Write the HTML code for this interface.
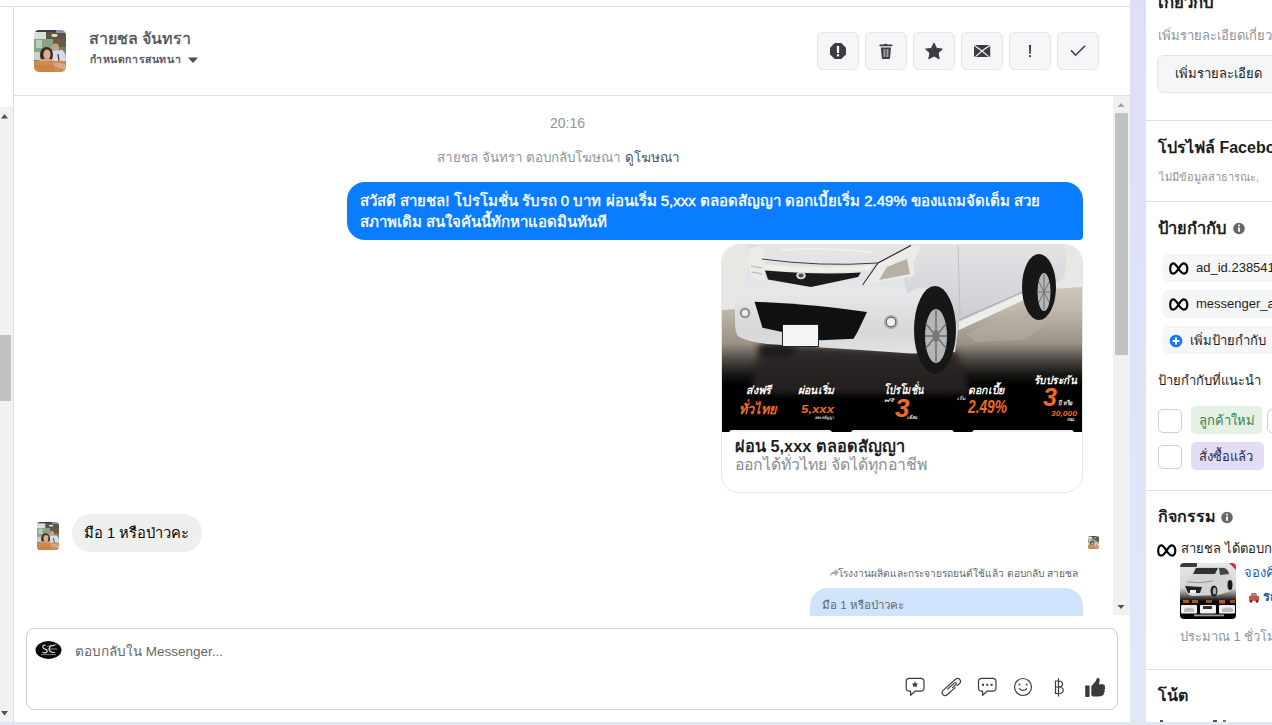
<!DOCTYPE html>
<html><head><meta charset="utf-8">
<style>
*{box-sizing:border-box;margin:0;padding:0}
html,body{width:1272px;height:725px;overflow:hidden;background:#fff;font-family:"Liberation Sans",sans-serif;color:#1c1e21}
.a{position:absolute}
.t{position:absolute;white-space:nowrap;line-height:1}
.btn{position:absolute;top:32px;width:42px;height:38px;border:1px solid #e3e5e8;border-radius:6px;background:#f5f6f7}
.chip{position:absolute;left:1162px;width:120px;height:28px;border-radius:6px;background:#f5f6f7}
.cb{position:absolute;left:1158px;width:24px;height:24px;border:1px solid #ccd0d5;border-radius:5px;background:#fff}
.sep{position:absolute;left:1146px;width:126px;height:1px;background:#dadde1}
</style></head><body>

<!-- top line -->
<div class="a" style="left:0;top:6px;width:1130px;height:1px;background:#dcdee1"></div>
<!-- left vertical line -->
<div class="a" style="left:13px;top:6px;width:1px;height:716px;background:#dcdee1"></div>
<!-- left scrollbar -->
<div class="a" style="left:0;top:107px;width:13px;height:615px;background:#f1f1f1"></div>
<div class="a" style="left:0;top:335px;width:11px;height:66px;background:#c1c1c1"></div>
<svg class="a" style="left:0;top:110px" width="10" height="10"><path d="M1 8.5 L4.5 4 L8 8.5Z" fill="#505050"/></svg>
<svg class="a" style="left:0;top:708px" width="10" height="10"><path d="M1 3 L8 3 L4.5 7.5Z" fill="#505050"/></svg>

<!-- header -->
<div class="a" style="left:13px;top:95px;width:1117px;height:1px;background:#dcdee1"></div>
<svg class="a" style="left:34px;top:30px" width="32" height="42" viewBox="0 0 32 42">
 <defs>
  <clipPath id="avc"><rect width="32" height="42" rx="5"/></clipPath>
  <filter id="avb" x="-10%" y="-10%" width="120%" height="120%"><feGaussianBlur stdDeviation="0.7"/></filter>
  <g id="avg">
   <rect width="32" height="42" fill="#7a7a68"/>
   <rect x="0" y="0" width="14" height="10" fill="#d9e0da"/>
   <rect x="12" y="0" width="20" height="9" fill="#5d5446"/>
   <rect x="0" y="0" width="32" height="2" fill="#3b3d45"/>
   <rect x="22" y="0" width="10" height="3" fill="#7f93b5"/>
   <ellipse cx="20.5" cy="5.5" rx="3.2" ry="1.4" fill="#f3e2b8"/>
   <rect x="0" y="9" width="19" height="14" fill="#87a487"/>
   <rect x="2" y="10" width="6" height="8" fill="#b9cdb8"/>
   <rect x="19" y="9" width="13" height="8" fill="#6a5a45"/>
   <rect x="0" y="22" width="10" height="8" fill="#c9d2c6"/>
   <ellipse cx="21.5" cy="17.5" rx="3.5" ry="4" fill="#c8a086"/>
   <path d="M17 21 L28 20 Q32 22 32 30 V40 H18Z" fill="#d7dce6"/>
   <path d="M24 24 L26 38" stroke="#3a3a44" stroke-width="1.2"/>
   <ellipse cx="12.5" cy="25" rx="6.5" ry="8" fill="#3b2924"/>
   <ellipse cx="13" cy="24.5" rx="3.6" ry="5" fill="#d9ae95"/>
   <path d="M5 30 Q12 27 20 30 V33 H5Z" fill="#d4a68b"/>
   <rect x="0" y="31" width="32" height="11" fill="#d08c4f"/>
   <path d="M0 35 H20 V42 H0Z" fill="#cc8445"/>
   <path d="M20 33 Q27 32 32 35 V40 Q26 38 20 36Z" fill="#d7a78c"/>
  </g>
 </defs>
 <g clip-path="url(#avc)"><use href="#avg" filter="url(#avb)"/></g>
</svg>
<div class="t" style="left:89px;top:31px;font-size:16px;font-weight:normal;-webkit-text-stroke:0.35px #4b4f56;color:#4b4f56">สายชล จันทรา</div>
<div class="t" style="left:90px;top:54px;font-size:10.5px;font-weight:normal;-webkit-text-stroke:0.35px #4b4f56;letter-spacing:0.6px;color:#4b4f56">กำหนดการสนทนา</div>
<svg class="a" style="left:187px;top:56px" width="12" height="8"><path d="M1 1.5 L11 1.5 L6 7Z" fill="#4b4f56"/></svg>

<!-- header buttons -->
<div class="btn" style="left:817px"></div>
<div class="btn" style="left:865px"></div>
<div class="btn" style="left:913px"></div>
<div class="btn" style="left:961px"></div>
<div class="btn" style="left:1009px"></div>
<div class="btn" style="left:1057px"></div>
<svg class="a" style="left:0;top:0" width="1130" height="96">
 <!-- octagon -->
 <path d="M834.7 43 H841.3 L846 47.7 V54.3 L841.3 59 H834.7 L830 54.3 V47.7Z" fill="#3c3d40"/>
 <rect x="836.9" y="46" width="2.2" height="7" fill="#fff"/>
 <rect x="836.9" y="54.2" width="2.2" height="2.2" fill="#fff"/>
 <!-- trash -->
 <path d="M883.5 45 Q885.75 42.5 888 45Z" fill="#3c3d40"/>
 <rect x="879.3" y="44.4" width="13.2" height="1.8" rx="0.9" fill="#3c3d40"/>
 <path d="M880.8 47.5 H891 L890 58 Q889.9 59 888.9 59 H882.9 Q881.9 59 881.8 58Z" fill="#3c3d40"/>
 <rect x="883.6" y="49" width="1" height="8" fill="#f5f6f7" opacity="0.8"/>
 <rect x="885.5" y="49" width="1" height="8" fill="#f5f6f7" opacity="0.5"/>
 <rect x="887.3" y="49" width="1" height="8" fill="#f5f6f7" opacity="0.8"/>
 <!-- star -->
 <path d="M934 43 L936.6 48.4 L942.4 49.1 L938.1 53 L939.2 58.8 L934 56 L928.8 58.8 L929.9 53 L925.6 49.1 L931.4 48.4Z" fill="#3c3d40" stroke="#3c3d40" stroke-width="1" stroke-linejoin="round"/>
 <!-- envelope -->
 <rect x="974" y="45" width="16.2" height="12" rx="1.5" fill="#3c3d40"/>
 <path d="M974.5 45.5 L982 51 L989.7 45.5 M975.5 56.6 L982 51 L988.7 56.6" stroke="#f5f6f7" stroke-width="1.2" fill="none"/>
 <!-- exclamation -->
 <path d="M1028.9 45 H1031.1 L1030.7 54 H1029.3Z" fill="#3c3d40"/>
 <circle cx="1030" cy="56.2" r="1.1" fill="#3c3d40"/>
 <!-- check -->
 <path d="M1071 50.3 L1075.6 55.2 L1085 45.8" stroke="#3c3d40" stroke-width="1.6" fill="none"/>
</svg>

<!-- message scrollbar -->
<div class="a" style="left:1113px;top:96px;width:17px;height:519px;background:#f1f1f1"></div>
<div class="a" style="left:1115px;top:113px;width:13px;height:242px;background:#c1c1c1"></div>
<svg class="a" style="left:1113px;top:96px" width="17" height="519">
 <path d="M4.5 11 L8 7 L11.5 11Z" fill="#a3a3a3"/>
 <path d="M4.5 509 L11.5 509 L8 513Z" fill="#505050"/>
</svg>

<!-- messages -->
<div class="t" style="left:550px;top:116px;font-size:14px;color:#90949c">20:16</div>
<div class="t" style="left:437px;top:151px;font-size:13.4px;color:#90949c">สายชล จันทรา ตอบกลับโฆษณา <span style="color:#4a5270">ดูโฆษณา</span></div>

<div class="a" style="left:347px;top:182px;width:736px;height:58px;border-radius:18px 18px 4px 18px;background:#0a7cff"></div>
<div class="a" style="left:360px;top:190px;width:720px;font-size:15px;line-height:21px;color:#fff;font-weight:normal;-webkit-text-stroke:0.4px #fff">สวัสดี สายชล! โปรโมชั่น รับรถ 0 บาท ผ่อนเริ่ม 5,xxx ตลอดสัญญา ดอกเบี้ยเริ่ม 2.49% ของแถมจัดเต็ม สวย<br>สภาพเดิม สนใจคันนี้ทักหาแอดมินทันที</div>

<!-- card -->
<div class="a" id="card" style="left:721px;top:244px;width:362px;height:249px;border:1px solid #e4e6eb;border-radius:18px;overflow:hidden;background:#fff">
 <svg class="a" style="left:-1px;top:-1px" width="362" height="188" viewBox="0 0 362 188">
  <defs>
   <linearGradient id="floor" x1="0" y1="43" x2="0" y2="188" gradientUnits="userSpaceOnUse">
    <stop offset="0" stop-color="#cdc5ba"/><stop offset="0.15" stop-color="#c2b9ad"/><stop offset="0.39" stop-color="#9a9084"/><stop offset="0.5" stop-color="#4f4a44"/><stop offset="0.6" stop-color="#181715"/><stop offset="0.68" stop-color="#000"/><stop offset="1" stop-color="#000"/>
   </linearGradient>
   <linearGradient id="body" x1="0" y1="0" x2="0" y2="110" gradientUnits="userSpaceOnUse">
    <stop offset="0" stop-color="#dcdde0"/><stop offset="0.45" stop-color="#e6e7e9"/><stop offset="0.8" stop-color="#d5d7d9"/><stop offset="1" stop-color="#e2e3e4"/>
   </linearGradient>
   <filter id="shb" x="-20%" y="-20%" width="140%" height="140%"><feGaussianBlur stdDeviation="3"/></filter>
   <linearGradient id="side" x1="0" y1="0" x2="0" y2="90" gradientUnits="userSpaceOnUse">
    <stop offset="0" stop-color="#e2e3e5"/><stop offset="0.6" stop-color="#d3d5d8"/><stop offset="1" stop-color="#c3c5c8"/>
   </linearGradient>
  </defs>
  <rect width="362" height="188" fill="#e8e7e3"/>
  <path d="M0 66 L362 43 V188 H0Z" fill="url(#floor)"/>
  <!-- floor reflection patch -->
  <path d="M245 90 L300 64 L330 75 L305 96 L255 98Z" fill="#b7afa4" opacity="0.5"/>
  <g filter="url(#shb)"><path d="M40 100 Q150 106 236 108 L250 150 L30 150 Q34 120 40 100Z" fill="#2a2622" opacity="0.9"/>
  <ellipse cx="56" cy="106" rx="20" ry="8" fill="#1f1c1a"/></g>
  <!-- car body -->
  <path d="M28 0 H342 Q347 18 343 34 L334 39 L314 50 L237 86 L234 108 L190 109.5 L140 106 L46 100 Q22 97 16 91 Q14 86 14 78 L14 60 Q18 46 26 34 Z" fill="url(#body)"/>
  <!-- side panel -->
  <path d="M176 0 H342 Q347 18 343 34 L334 39 L314 50 L237 86 L233 70 Q222 40 196 44 L186 50 Q180 20 176 0Z" fill="url(#side)"/>
  <path d="M237 0 L239 70" stroke="#b9bbbe" stroke-width="0.8"/>
  <path d="M238 78 L314 44 L316 50 L238 86Z" fill="#eceded"/>
  <path d="M238 76 L313 43" stroke="#8d8f92" stroke-width="0.7"/>
  <!-- hood -->
  <path d="M41 0 H190 L157 19 Q100 22 41 15Z" fill="#e3e4e6"/>
  <path d="M60 6 Q100 3 150 8" stroke="#f3f3f4" stroke-width="2" fill="none" opacity="0.8"/>
  <!-- left headlight -->
  <path d="M28 5 L41 1 L44 17 L43 37 L30 34 L27 20Z" fill="#ecebe8"/>
  <path d="M30 22 L41 24 M31 28 L41 30" stroke="#a5a5a5" stroke-width="0.8"/>
  <!-- hood edge -->
  <path d="M41 15 Q100 23 157 19 L190 1.5" stroke="#3d3d3d" stroke-width="1" fill="none"/>
  <!-- chrome bar -->
  <path d="M43 20 Q98 26 153 21 L149 26 Q98 31 44 26Z" fill="#efeee9"/>
  <!-- grille -->
  <path d="M44 26.5 Q98 31 140 28.5 L137 33 L90 43 L47 35.5Z" fill="#1a1a1a"/>
  <ellipse cx="80" cy="31.5" rx="4.8" ry="3.8" fill="#d8d8d8"/>
  <ellipse cx="80" cy="31.5" rx="2.6" ry="2" fill="#4a4a4a"/>
  <!-- right headlight -->
  <path d="M141.6 41 L157 19 L190 1.5 L201 2 L192 18 L193.5 32Z" fill="#ecebe6"/>
  <path d="M158 36 L166 23 L186 15 L189 30Z" fill="#a59d8c" opacity="0.75"/>
  <path d="M141.6 41 L157 19 L190 1.5" stroke="#2e2e2e" stroke-width="1.1" fill="none"/>
  <!-- lower black grille -->
  <path d="M33.6 57.8 Q90 60 146 68 L137 87 L132.6 94.7 L99.6 96.3 L41.5 83.7Z" fill="#101010"/>
  <rect x="61" y="80" width="37" height="23" fill="#222"/>
  <rect x="62" y="81" width="35" height="21" fill="#f5f5f5"/>
  <circle cx="24" cy="69" r="5.5" fill="#a9abad"/><circle cx="24" cy="69" r="4" fill="#ededed"/><circle cx="24" cy="69" r="4" fill="none" stroke="#555" stroke-width="0.8"/>
  <circle cx="170" cy="78" r="7" fill="#a9abad"/><circle cx="170" cy="78" r="4.8" fill="#eeeeee"/><circle cx="170" cy="78" r="4.8" fill="none" stroke="#444" stroke-width="0.9"/>
  <!-- under shadow tire -->
  
  
  <!-- front wheel -->
  <ellipse cx="214" cy="86" rx="21" ry="44" fill="#171717"/>
  <ellipse cx="215" cy="92" rx="11" ry="27" fill="#b3b5b7"/>
  <path d="M215 66 V118 M205 80 L225 104 M225 80 L205 104 M204 92 H226" stroke="#6c6e70" stroke-width="1.4"/>
  <ellipse cx="215" cy="92" rx="3.5" ry="6" fill="#777"/>
  <!-- rear wheel -->
  <ellipse cx="318" cy="43" rx="17" ry="33" fill="#171717"/>
  <ellipse cx="323" cy="48" rx="6.5" ry="19" fill="#b3b5b7"/>
  <path d="M323 30 V66 M317 48 H329 M318 38 L328 58 M328 38 L318 58" stroke="#6c6e70" stroke-width="1"/>
  <!-- text band -->
  <g font-family="Liberation Sans, sans-serif" font-style="italic" font-weight="bold">
   <text x="25" y="149.5" font-size="11" fill="#fff" textLength="25" lengthAdjust="spacingAndGlyphs">ส่งฟรี</text>
   <text x="18" y="169.5" font-size="14" fill="#f26a25" textLength="37" lengthAdjust="spacingAndGlyphs">ทั่วไทย</text>
   <text x="77" y="149.5" font-size="11" fill="#fff" textLength="36" lengthAdjust="spacingAndGlyphs">ผ่อนเริ่ม</text>
   <text x="80" y="168.5" font-size="11" fill="#f26a25" textLength="33" lengthAdjust="spacingAndGlyphs">5,xxx</text>
   <text x="94" y="175" font-size="4.5" fill="#ddd" textLength="19" lengthAdjust="spacingAndGlyphs">ตลอดสัญญา</text>
   <text x="163" y="150" font-size="12" fill="#fff" textLength="39" lengthAdjust="spacingAndGlyphs">โปรโมชั่น</text>
   <text x="162" y="157.5" font-size="4.5" fill="#ddd" textLength="10" lengthAdjust="spacingAndGlyphs">ฟรี</text>
   <text x="174" y="173" font-size="26" fill="#f26a25">3</text>
   <text x="186" y="175" font-size="5" fill="#ddd" textLength="10" lengthAdjust="spacingAndGlyphs">เดือน</text>
   <text x="247" y="149.5" font-size="11" fill="#fff" textLength="36" lengthAdjust="spacingAndGlyphs">ดอกเบี้ย</text>
   <text x="236" y="155.5" font-size="4.5" fill="#ddd" textLength="8" lengthAdjust="spacingAndGlyphs">เริ่ม</text>
   <text x="247" y="169" font-size="18" fill="#f26a25" textLength="39" lengthAdjust="spacingAndGlyphs">2.49%</text>
   <text x="313" y="140" font-size="11" fill="#fff" textLength="43" lengthAdjust="spacingAndGlyphs">รับประกัน</text>
   <text x="322" y="162" font-size="25" fill="#f26a25">3</text>
   <text x="337" y="161" font-size="6" fill="#eee" textLength="15" lengthAdjust="spacingAndGlyphs">ปี หรือ</text>
   <text x="330" y="172" font-size="8" fill="#f26a25" textLength="26" lengthAdjust="spacingAndGlyphs">30,000</text>
   <text x="346" y="177" font-size="5" fill="#eee" textLength="8" lengthAdjust="spacingAndGlyphs">กม.</text>
  </g>
  <rect x="8" y="186" width="103" height="6" rx="3" fill="#f4f4f4"/>
  <rect x="130" y="186" width="103" height="6" rx="3" fill="#f4f4f4"/>
  <rect x="251" y="186" width="102" height="6" rx="3" fill="#f4f4f4"/>
 </svg>
 <div class="t" style="left:13px;top:193px;font-size:16.3px;font-weight:bold;color:#1c1e21">ผ่อน 5,xxx ตลอดสัญญา</div>
 <div class="t" style="left:13px;top:212px;font-size:15.8px;color:#8a8d91">ออกได้ทั่วไทย จัดได้ทุกอาชีพ</div>
</div>

<!-- incoming -->
<svg class="a" style="left:37px;top:522px" width="22" height="28" viewBox="0 0 32 42" preserveAspectRatio="none"><g clip-path="url(#avc)"><use href="#avg" filter="url(#avb)"/></g></svg>
<div class="a" style="left:72px;top:514px;width:130px;height:38px;border-radius:19px;background:#efefef"></div>
<div class="t" style="left:84px;top:526px;font-size:14.7px;color:#050505">มือ 1 หรือป่าวคะ</div>

<svg class="a" style="left:1088px;top:536px" width="11" height="13" viewBox="0 0 32 42" preserveAspectRatio="none"><g clip-path="url(#avc)"><use href="#avg" filter="url(#avb)"/></g></svg>

<svg class="a" style="left:829px;top:567px" width="10" height="10"><path d="M1 9.5 Q1.5 4.5 6 4.2 V1.8 L9.8 5.6 L6 9.2 V6.8 Q3 6.8 1 9.5Z" fill="#a8abb0"/></svg>
<div class="t" style="left:838px;top:569px;font-size:10.2px;color:#65676b">โรงงานผลิตและกระจายรถยนต์ใช้แล้ว ตอบกลับ สายชล</div>
<div class="a" style="left:810px;top:588px;width:273px;height:28px;overflow:hidden"><div style="width:273px;height:50px;border-radius:18px;background:#cfe4fc"></div></div>
<div class="t" style="left:822px;top:600px;font-size:11.5px;color:#606770">มือ 1 หรือป่าวคะ</div>

<!-- composer -->
<div class="a" style="left:26px;top:628px;width:1092px;height:82px;border:1px solid #ccd0d5;border-radius:8px"></div>
<svg class="a" style="left:35px;top:640px" width="28" height="20">
 <ellipse cx="13.5" cy="10" rx="13" ry="9" fill="#0b0b0b"/>
 <path d="M10.5 5.2 Q7.5 4.6 7.8 7 Q8.2 9 10.8 9.4 Q13 10 11.8 12.2 Q10.5 13.6 7.5 12.6" stroke="#e8e8e8" stroke-width="1.1" fill="none"/>
 <path d="M19.5 5.6 Q14.5 4.8 14.2 9 Q14.2 12.8 19.8 12.4" stroke="#e8e8e8" stroke-width="1.1" fill="none"/>
 <path d="M12 6.5 L21.5 4.5 M13 9 H22" stroke="#cfcfcf" stroke-width="0.7"/>
 <path d="M6 14.6 H21" stroke="#9a9a9a" stroke-width="0.8"/>
</svg>
<div class="t" style="left:75px;top:645px;font-size:13.5px;color:#65676b">ตอบกลับใน Messenger...</div>
<svg class="a" style="left:900px;top:672px" width="210" height="30" viewBox="900 672 210 30">
 <g fill="none" stroke="#3a3b3d" stroke-width="1.2" stroke-linejoin="round" stroke-linecap="round">
  <!-- sticker bubble -->
  <path d="M909.5 678.3 H920.7 Q924 678.3 924 681.6 V688 Q924 691.2 920.7 691.2 H915 L910.6 695.3 V691.2 H909.5 Q906.2 691.2 906.2 688 V681.6 Q906.2 678.3 909.5 678.3Z"/>
  <!-- paperclip -->
  <g transform="translate(951.3 687) rotate(-42)" stroke-width="1.15">
   <path d="M2.5 3 H-8.3 A3 3 0 0 1 -8.3 -3 H8.3 A3 3 0 0 1 8.3 3 H5.5"/>
   <path d="M-4 -0.9 H5.2 A1.1 1.1 0 0 1 5.2 1.3 H0.5"/>
  </g>
  <!-- chat dots -->
  <path d="M981.8 678.3 H992.7 Q996 678.3 996 681.6 V688 Q996 691.2 992.7 691.2 H987 L982.6 695.3 V691.2 H981.8 Q978.5 691.2 978.5 688 V681.6 Q978.5 678.3 981.8 678.3Z"/>
  <!-- smiley -->
  <circle cx="1023" cy="687" r="8.5"/>
  <path d="M1019.3 688.6 Q1023 692.3 1026.7 688.6"/>
  <!-- baht -->
  <path d="M1055.5 681 H1059 Q1062.5 681 1062.5 684.2 Q1062.5 687 1059 687 H1055.5 M1059 687 Q1063.2 687 1063.2 690.3 Q1063.2 693.5 1059 693.5 H1055.5 V681 M1058.5 678.5 V696"/>
 </g>
 <path d="M915 681.3 L916 683.6 L918.4 683.8 L916.6 685.3 L917.1 687.6 L915 686.3 L912.9 687.6 L913.4 685.3 L911.6 683.8 L914 683.6Z" fill="#3a3b3d"/>
 <rect x="982" y="683.8" width="2" height="2" fill="#3a3b3d"/><rect x="986.3" y="683.8" width="2" height="2" fill="#3a3b3d"/><rect x="990.6" y="683.8" width="2" height="2" fill="#3a3b3d"/>
 <circle cx="1019.4" cy="684.5" r="0.95" fill="#3a3b3d"/><circle cx="1026.6" cy="684.5" r="0.95" fill="#3a3b3d"/>
 <!-- thumb -->
 <rect x="1085.2" y="685.6" width="4.4" height="11.4" rx="0.7" fill="#3a3b3d"/>
 <path d="M1091.3 686.3 L1095.6 681.2 Q1096.6 678.8 1097.3 677.9 Q1099.3 677.3 1099.6 679.6 Q1099.9 681.8 1098.8 684.2 H1102.6 Q1105.2 684.6 1104.9 686.8 Q1105.9 688.4 1104.5 689.8 Q1105.5 691.6 1103.9 692.8 Q1104.4 695.1 1102 695.8 Q1100.9 696.6 1098.3 696.6 H1093.5 Q1091.3 696.6 1091.3 694.5Z" fill="#3a3b3d"/>
</svg>

<!-- lavender stripe -->
<div class="a" style="left:1130px;top:0;width:16px;height:722px;background:linear-gradient(180deg,#dedff5,#e1e8f8)"></div>
<!-- bottom strip -->
<div class="a" style="left:0;top:722px;width:1272px;height:3px;background:#e1e8f5"></div>

<!-- right panel -->
<div id="rp">
 <div class="t" style="left:1158px;top:-5px;font-size:16.8px;font-weight:bold">เกี่ยวกับ</div>
 <div class="t" style="left:1158px;top:29px;font-size:13px;color:#90949c">เพิ่มรายละเอียดเกี่ยวกับ</div>
 <div class="a" style="left:1157px;top:55px;width:130px;height:38px;border:1px solid #e4e6eb;border-radius:7px;background:#f5f6f7"></div>
 <div class="t" style="left:1175px;top:67px;font-size:13px;color:#1c1e21">เพิ่มรายละเอียด</div>
 <div class="sep" style="top:120px"></div>
 <div class="t" style="left:1158px;top:140px;font-size:16px;font-weight:bold">โปรไฟล์ Facebook</div>
 <div class="t" style="left:1159px;top:172px;font-size:11px;color:#90949c">ไม่มีข้อมูลสาธารณะ,</div>
 <div class="sep" style="top:201px"></div>
 <div class="t" style="left:1158px;top:220px;font-size:16.5px;font-weight:bold">ป้ายกำกับ</div>
 <svg class="a" style="left:1233px;top:222px" width="12" height="13"><circle cx="6" cy="6.5" r="5.8" fill="#65676b"/><rect x="5.1" y="5.4" width="1.8" height="4.4" fill="#fff"/><circle cx="6" cy="3.6" r="1" fill="#fff"/></svg>
 <div class="chip" style="top:254px"></div>
 <div class="chip" style="top:290px"></div>
 <div class="chip" style="top:326px"></div>
 <svg class="a" style="left:1169px;top:262px" width="19.5" height="13" viewBox="0 0 36 24"><path d="M2.2 12.5 C2.2 6.5 4.5 2.6 7.8 2.6 C11.5 2.6 14.2 7 18 13 C21.5 18.5 24 21.4 27.5 21.4 C31 21.4 33.8 18 33.8 12.2 C33.8 6.5 31 2.6 27.5 2.6 C23.8 2.6 21 7 18 11.8 C14.6 17.5 11.6 21.4 7.8 21.4 C4.5 21.4 2.2 18 2.2 12.5Z" fill="none" stroke="#000" stroke-width="4"/></svg>
 <svg class="a" style="left:1169px;top:298px" width="19.5" height="13" viewBox="0 0 36 24"><path d="M2.2 12.5 C2.2 6.5 4.5 2.6 7.8 2.6 C11.5 2.6 14.2 7 18 13 C21.5 18.5 24 21.4 27.5 21.4 C31 21.4 33.8 18 33.8 12.2 C33.8 6.5 31 2.6 27.5 2.6 C23.8 2.6 21 7 18 11.8 C14.6 17.5 11.6 21.4 7.8 21.4 C4.5 21.4 2.2 18 2.2 12.5Z" fill="none" stroke="#000" stroke-width="4"/></svg>
 <div class="t" style="left:1196px;top:261px;font-size:13px;color:#1c1e21">ad_id.23854123456</div>
 <div class="t" style="left:1196px;top:297px;font-size:13px;color:#1c1e21">messenger_ads</div>
 <svg class="a" style="left:1169px;top:334px" width="14" height="14"><circle cx="7" cy="7" r="6.3" fill="#1877f2"/><path d="M7 3.6 V10.4 M3.6 7 H10.4" stroke="#fff" stroke-width="2"/></svg>
 <div class="t" style="left:1190px;top:334px;font-size:13px;color:#1c1e21">เพิ่มป้ายกำกับ</div>
 <div class="t" style="left:1158px;top:374px;font-size:13px;color:#1c1e21">ป้ายกำกับที่แนะนำ</div>
 <div class="cb" style="top:409px"></div>
 <div class="cb" style="top:445px"></div>
 <div class="a" style="left:1191px;top:406px;width:71px;height:28px;border-radius:5px;background:#e5f1e4"></div>
 <div class="t" style="left:1199px;top:414px;font-size:13px;color:#36804f">ลูกค้าใหม่</div>
 <div class="a" style="left:1267px;top:409px;width:24px;height:24px;border:1px solid #ccd0d5;border-radius:5px"></div>
 <div class="a" style="left:1191px;top:442px;width:73px;height:28px;border-radius:5px;background:#e3dcf5"></div>
 <div class="t" style="left:1199px;top:450px;font-size:13px;color:#2f2a4a">สั่งซื้อแล้ว</div>
 <div class="sep" style="top:490px"></div>
 <div class="t" style="left:1158px;top:509px;font-size:16px;font-weight:bold">กิจกรรม</div>
 <svg class="a" style="left:1221px;top:511px" width="12" height="13"><circle cx="6" cy="6.5" r="5.8" fill="#65676b"/><rect x="5.1" y="5.4" width="1.8" height="4.4" fill="#fff"/><circle cx="6" cy="3.6" r="1" fill="#fff"/></svg>
 <svg class="a" style="left:1157px;top:544px" width="19.5" height="13" viewBox="0 0 36 24"><path d="M2.2 12.5 C2.2 6.5 4.5 2.6 7.8 2.6 C11.5 2.6 14.2 7 18 13 C21.5 18.5 24 21.4 27.5 21.4 C31 21.4 33.8 18 33.8 12.2 C33.8 6.5 31 2.6 27.5 2.6 C23.8 2.6 21 7 18 11.8 C14.6 17.5 11.6 21.4 7.8 21.4 C4.5 21.4 2.2 18 2.2 12.5Z" fill="none" stroke="#000" stroke-width="4"/></svg>
 <div class="t" style="left:1181px;top:542px;font-size:13px;color:#1c1e21">สายชล ได้ตอบกลับ</div>
 <svg class="a" style="left:1180px;top:563px" width="56" height="56" viewBox="0 0 56 56">
  <defs><clipPath id="thc"><rect width="56" height="56" rx="4"/></clipPath><filter id="thb"><feGaussianBlur stdDeviation="0.45"/></filter>
   <linearGradient id="thf" x1="0" y1="0" x2="0" y2="1"><stop offset="0" stop-color="#e6e6e6"/><stop offset="0.45" stop-color="#d9d6d2"/><stop offset="0.6" stop-color="#5b5650"/><stop offset="0.68" stop-color="#0a0a0a"/><stop offset="1" stop-color="#000"/></linearGradient></defs>
  <g clip-path="url(#thc)"><g filter="url(#thb)">
   <rect width="56" height="56" fill="url(#thf)"/>
   <rect x="0" y="0" width="17" height="4" rx="1" fill="#3a3a3a"/>
   <path d="M49 0 H56 V7Z" fill="#d4333a"/>
   <path d="M5 23 Q6 16 11 13 L16 5 Q18 3.5 22 3.5 H42 Q47 4 50 10 L52 16 V26 L48 29 L38 32 L12 33 Q5 31 5 23Z" fill="#d3d4d6"/>
   <path d="M16 5 H38 L35 11 H13Z" fill="#333"/>
   <path d="M39 5 H44 Q48 6 49 11 L40 12Z" fill="#444"/>
   <path d="M7 19 Q20 21 33 18" stroke="#888" stroke-width="0.8" fill="none"/>
   <path d="M5 23 L22 24 L20 30 L8 30Z" fill="#222"/>
   <rect x="10" y="27" width="6" height="3" fill="#f2f2f2"/>
   <ellipse cx="34" cy="28" rx="3.5" ry="5.5" fill="#1e1e1e"/><ellipse cx="34.5" cy="28" rx="1.8" ry="3.5" fill="#aaa"/>
   <ellipse cx="50" cy="22" rx="2.5" ry="5" fill="#1e1e1e"/>
   <rect x="3" y="37" width="6" height="3" fill="#b4541f"/><rect x="12" y="37" width="6" height="3" fill="#b4541f"/><rect x="26" y="37" width="6" height="3" fill="#a0501f"/><rect x="39" y="37" width="6" height="3.5" fill="#c2581f"/><rect x="50" y="37" width="5" height="3" fill="#a0501f"/>
   <rect x="1" y="42" width="16" height="8.5" rx="1" fill="#eeeeee"/><rect x="20" y="42" width="16" height="8.5" rx="1" fill="#f2f2f2"/><rect x="39" y="42" width="16" height="8.5" rx="1" fill="#eeeeee"/>
   <path d="M4 46 Q9 43 14 46 V49 H4Z" fill="#bbb"/><rect x="23" y="43" width="9" height="3" fill="#333"/><path d="M42 46 Q48 43 53 46 V49 H42Z" fill="#bbb"/>
   <rect x="14" y="51.5" width="30" height="1.8" fill="#999"/>
  </g></g>
 </svg>
 <div class="t" style="left:1244px;top:566px;font-size:13px;color:#1b5eb5">จองคิว</div>
 <svg class="a" style="left:1248px;top:592px" width="12" height="11"><path d="M2.5 4 L4 1 H8 L9.5 4 H11 V9 H1 V4Z" fill="#d9503f"/><rect x="3" y="1.8" width="6" height="2" fill="#5aa0e0"/><circle cx="3" cy="9.5" r="1.3" fill="#333"/><circle cx="9" cy="9.5" r="1.3" fill="#333"/></svg>
 <div class="t" style="left:1263px;top:590px;font-size:13px;font-weight:bold;color:#1b5eb5">รถ</div>
 <div class="t" style="left:1180px;top:630px;font-size:13px;color:#90949c">ประมาณ 1 ชั่วโมง</div>
 <div class="sep" style="top:669px"></div>
 <div class="t" style="left:1158px;top:688px;font-size:16px;font-weight:bold">โน้ต</div>
 <div class="a" style="left:1160px;top:720px;width:3px;height:2px;background:#555"></div><div class="a" style="left:1213px;top:720px;width:4px;height:2px;background:#555"></div><div class="a" style="left:1223px;top:720px;width:3px;height:2px;background:#777"></div>
</div>

</body></html>
